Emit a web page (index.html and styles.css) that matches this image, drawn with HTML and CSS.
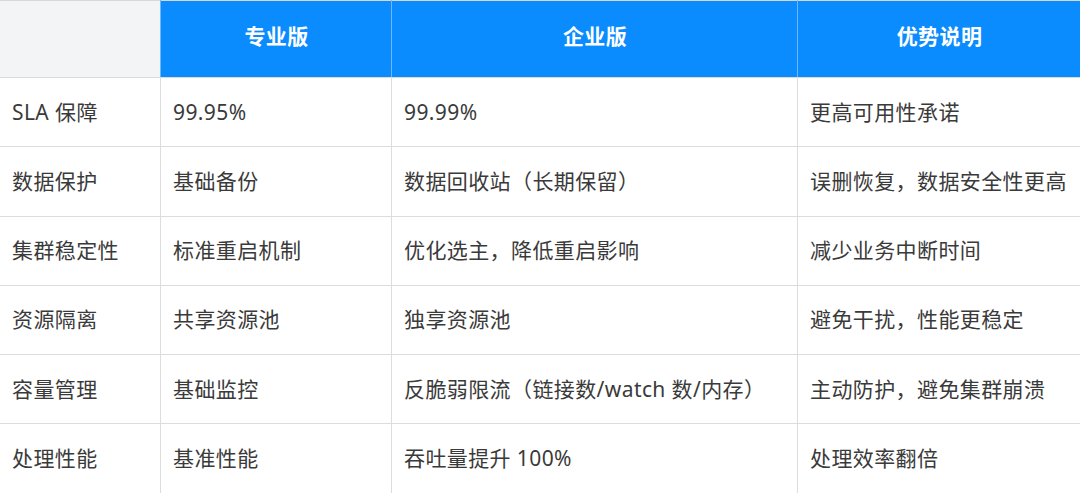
FILE: index.html
```html
<!DOCTYPE html>
<html lang="zh">
<head>
    <meta charset="UTF-8">
    <meta name="viewport" content="width=device-width, initial-scale=1.0">
    <title>专业版与企业版对比</title>
    <link rel="stylesheet" href="styles.css">
</head>
<body>
    <table class="compare">
        <colgroup>
            <col class="col-name">
            <col class="col-pro">
            <col class="col-ent">
            <col class="col-note">
        </colgroup>
        <thead>
            <tr>
                <th class="blank"></th>
                <th>专业版</th>
                <th>企业版</th>
                <th>优势说明</th>
            </tr>
        </thead>
        <tbody>
            <tr>
                <td>SLA 保障</td>
                <td>99.95%</td>
                <td>99.99%</td>
                <td>更高可用性承诺</td>
            </tr>
            <tr>
                <td>数据保护</td>
                <td>基础备份</td>
                <td>数据回收站（长期保留）</td>
                <td>误删恢复，数据安全性更高</td>
            </tr>
            <tr>
                <td>集群稳定性</td>
                <td>标准重启机制</td>
                <td>优化选主，降低重启影响</td>
                <td>减少业务中断时间</td>
            </tr>
            <tr>
                <td>资源隔离</td>
                <td>共享资源池</td>
                <td>独享资源池</td>
                <td>避免干扰，性能更稳定</td>
            </tr>
            <tr>
                <td>容量管理</td>
                <td>基础监控</td>
                <td>反脆弱限流（链接数/watch 数/内存）</td>
                <td>主动防护，避免集群崩溃</td>
            </tr>
            <tr>
                <td>处理性能</td>
                <td>基准性能</td>
                <td>吞吐量提升 100%</td>
                <td>处理效率翻倍</td>
            </tr>
        </tbody>
    </table>
</body>
</html>
```

FILE: styles.css
```css
body {
    margin: 0;
    padding: 0;
    background-color: #fff;
    font-family: "Noto Sans", "Noto Sans CJK SC", sans-serif;
    color: #3a3a3a;
}
.compare {
    width: 1081px;
    margin-left: -1px;
    border-collapse: collapse;
    table-layout: fixed;
    font-size: 21px;
    letter-spacing: 0.4px;
}
.col-name { width: 161px; }
.col-pro { width: 231px; }
.col-ent { width: 406px; }
.col-note { width: 283px; }
th, td {
    border: 1px solid #dcdcdc;
    padding: 0 11px 0 12px;
    text-align: left;
    white-space: nowrap;
    line-height: 1.2;
}
th {
    height: 72px;
    background-color: #0a8cff;
    color: #fff;
    font-weight: bold;
    text-align: center;
    padding-bottom: 4px;
    border-top-color: #d8d8d8;
    border-left-color: #6cb8fa;
    border-right-color: #6cb8fa;
}
th.blank {
    background-color: #f3f4f6;
    border-left-color: #dcdcdc;
}
td {
    height: 68.3px;
}
```
